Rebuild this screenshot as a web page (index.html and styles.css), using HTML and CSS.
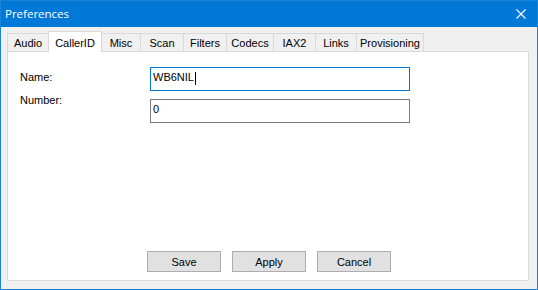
FILE: index.html
```html
<!DOCTYPE html>
<html lang="en">
<head>
    <meta charset="UTF-8">
    <meta name="viewport" content="width=device-width, initial-scale=1.0">
    <link rel="stylesheet" href="styles.css">
</head>
<body>
    <div class="window">
        <div class="titlebar">
            <span class="title">Preferences</span>
            <svg class="close" width="10" height="10" viewBox="0 0 10 10">
                <path d="M0.5 0.5 L9.5 9.5 M9.5 0.5 L0.5 9.5" stroke="#ffffff" stroke-width="1.1" fill="none"/>
            </svg>
        </div>
        <div class="client">
            <div class="tabs">
                <div class="tab">Audio</div>
                <div class="tab tab-active">CallerID</div>
                <div class="tab">Misc</div>
                <div class="tab">Scan</div>
                <div class="tab">Filters</div>
                <div class="tab">Codecs</div>
                <div class="tab">IAX2</div>
                <div class="tab">Links</div>
                <div class="tab">Provisioning</div>
            </div>
            <div class="panel">
                <div class="form">
                    <div class="row">
                        <label class="label">Name:</label>
                        <div class="field field-focus">WB6NIL<span class="caret"></span></div>
                    </div>
                    <div class="row">
                        <label class="label label-high">Number:</label>
                        <div class="field">0</div>
                    </div>
                </div>
                <div class="buttons">
                    <button class="btn">Save</button>
                    <button class="btn">Apply</button>
                    <button class="btn">Cancel</button>
                </div>
            </div>
        </div>
    </div>
</body>
</html>
```

FILE: styles.css
```css
body {
    margin: 0;
    font-family: "Liberation Sans", Arial, sans-serif;
    font-size: 11px;
    color: #000000;
}
.window {
    width: 538px;
    height: 290px;
    box-sizing: border-box;
    border: 1px solid #1883d7;
    background-color: #f0f0f0;
    display: flex;
    flex-direction: column;
}
.titlebar {
    height: 26px;
    background-color: #0078d7;
    color: white;
    display: flex;
    align-items: center;
    justify-content: space-between;
    padding-left: 4px;
    flex-shrink: 0;
}
.title {
    font-family: "Open Sans", "Liberation Sans", sans-serif;
    font-size: 11.5px;
    margin-top: -1px;
}
.close {
    margin-right: 11px;
    margin-top: -1px;
}
.client {
    flex: 1;
    display: flex;
    flex-direction: column;
}
.tabs {
    height: 24px;
    display: flex;
    align-items: flex-end;
    padding-left: 6px;
}
.tab {
    box-sizing: border-box;
    height: 18px;
    padding-top: 3px;
    line-height: 13px;
    text-align: center;
    border-top: 1px solid #d9d9d9;
    border-right: 1px solid #d9d9d9;
    background-color: #f0f0f0;
}
.tab:nth-child(1) { width: 42px; border-left: 1px solid #d9d9d9; }
.tab:nth-child(2) { width: 54px; }
.tab:nth-child(3) { width: 39px; }
.tab:nth-child(4) { width: 43px; }
.tab:nth-child(5) { width: 43px; }
.tab:nth-child(6) { width: 47px; }
.tab:nth-child(7) { width: 42px; }
.tab:nth-child(8) { width: 41px; }
.tab:nth-child(9) { width: 67px; }
.tab-active {
    height: 21px;
    margin-left: -1px;
    margin-bottom: -1px;
    padding-top: 5px;
    border-left: 1px solid #d9d9d9;
    background-color: white;
    position: relative;
    z-index: 1;
}
.panel {
    flex: 1;
    margin: 0 8px 8px 6px;
    border: 1px solid #d9d9d9;
    background-color: white;
    display: flex;
    flex-direction: column;
}
.form {
    padding: 15px 0 0 12px;
    display: flex;
    flex-direction: column;
    gap: 8px;
}
.row {
    display: flex;
    align-items: flex-start;
}
.label {
    width: 130px;
    line-height: 13px;
    margin-top: 4px;
}
.label-high {
    margin-top: -5px;
}
.field {
    box-sizing: border-box;
    width: 260px;
    height: 24px;
    padding: 3px 2px 0;
    line-height: 13px;
    border: 1px solid #7a7a7a;
    display: flex;
    align-items: flex-start;
}
.field-focus {
    border-color: #0078d7;
}
.caret {
    width: 1px;
    height: 13px;
    margin-top: 1px;
    margin-left: 1px;
    background-color: #000000;
}
.buttons {
    margin-top: auto;
    padding: 0 0 8px 139px;
    display: flex;
    gap: 11px;
}
.btn {
    width: 74px;
    height: 21px;
    padding: 0;
    font-family: "Liberation Sans", Arial, sans-serif;
    font-size: 11px;
    color: #000000;
    background-color: #e1e1e1;
    border: 1px solid #adadad;
}
```
